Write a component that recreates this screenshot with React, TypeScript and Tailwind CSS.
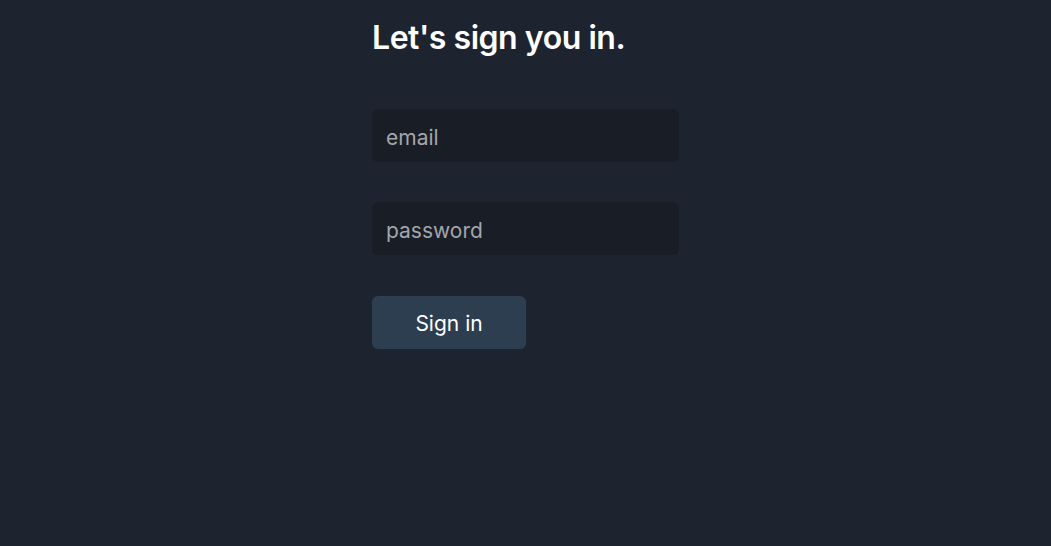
import React, { useState } from "react";

export default function App() {
  const [email, setEmail] = useState("");
  const [password, setPassword] = useState("");

  return (
    <div
      className="min-h-screen w-full bg-[#1e2330] flex justify-center"
      style={{ fontFamily: "Inter, 'Noto Sans', sans-serif" }}
    >
      <form
        className="w-[307px] flex flex-col items-start pt-[16px]"
        onSubmit={(e) => e.preventDefault()}
      >
        <h1 className="text-[32px] leading-[44px] font-semibold text-white tracking-[-0.45px]">
          Let's sign you in.
        </h1>
        <input
          type="email"
          placeholder="email"
          value={email}
          onChange={(e) => setEmail(e.target.value)}
          className="mt-[49px] w-full h-[53px] rounded-md bg-[#191d25] px-[14px] pt-[3px] text-[21px] text-gray-200 placeholder:text-[#a3a6ab] outline-none"
        />
        <input
          type="password"
          placeholder="password"
          value={password}
          onChange={(e) => setPassword(e.target.value)}
          className="mt-[40px] w-full h-[53px] rounded-md bg-[#191d25] px-[14px] pt-[3px] text-[21px] text-gray-200 placeholder:text-[#a3a6ab] outline-none"
        />
        <button
          type="submit"
          className="mt-[41px] w-[154px] h-[53px] rounded-md bg-[#2c3e50] pt-[2px] text-[21px] text-white"
        >
          Sign in
        </button>
      </form>
    </div>
  );
}
